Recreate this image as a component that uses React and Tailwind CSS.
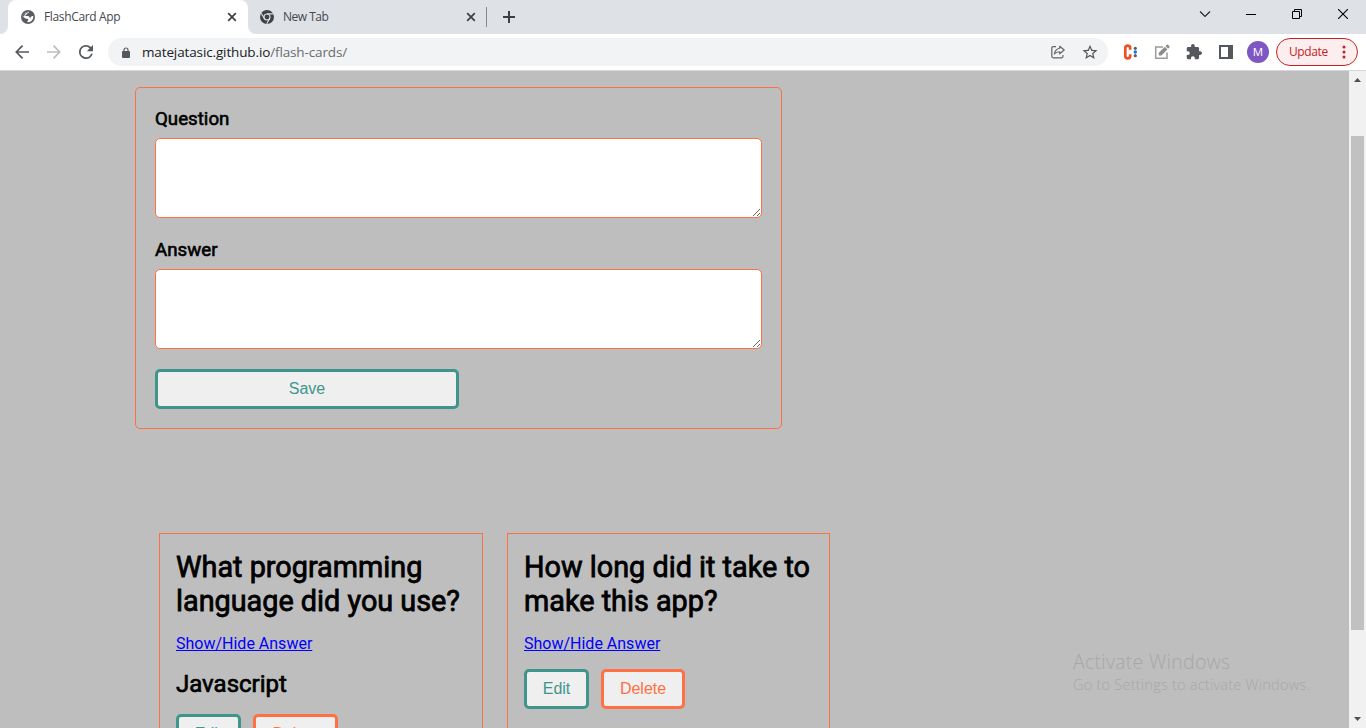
const UI_FONT = "font-['Open_Sans','Noto_Sans',sans-serif]";

function TabClose() {
  return (
    <svg width="10" height="10" viewBox="0 0 10 10" className="shrink-0">
      <path d="M1.2 1.2 8.8 8.8M8.8 1.2 1.2 8.8" stroke="#3c4043" strokeWidth="1.7" />
    </svg>
  );
}

function GlobeIcon() {
  return (
    <svg width="14" height="14" viewBox="0 0 14 14" className="shrink-0">
      <circle cx="7" cy="7" r="7" fill="#5a5e63" />
      <path d="M7.6 1.7C8.100 2.700 7.200 3.400 6 3.500c-.1 1.300-1.500 1-1.700 2 0 .7.900.6 1.900.6 1.500 0 2.300.5 2.300 1.600 1.300 0 1.900-.7 2.100-1.700h1.700c.2 2.500-.8 4.400-2.600 5.500-1 .6-2.100.9-3.200.8-.4-1 .2-1.500.7-2.100.3-1-.6-1.400-1.600-1.400C4 8.800 3.600 7 1.700 7 1.600 4 4.300 1.600 7.600 1.700Z" fill="#fff" />
      <path d="M1.700 7C1.600 4 4.300 1.600 7.600 1.700 6.500 3 4.300 2.800 3.900 4.600 3.600 5.800 3 6.700 1.700 7Z" fill="#5a5e63" />
    </svg>
  );
}

function ChromeIcon() {
  return (
    <svg width="14" height="14" viewBox="0 0 14 14" className="shrink-0">
      <circle cx="7" cy="7" r="7" fill="#3f4347" />
      <circle cx="7" cy="7" r="3" fill="none" stroke="#dee1e6" strokeWidth="1.100" />
      <path d="M7 3.900h6.200M4.300 8.500 1.200 3.300M9.700 8.500 6.700 13.700" stroke="#dee1e6" strokeWidth="1.100" />
    </svg>
  );
}

function TabStrip() {
  return (
    <div className="flex h-[34px] bg-[#dee1e6]">
      <div className="h-full w-2 bg-white"><div className="h-full rounded-br-lg bg-[#dee1e6]" /></div>
      <div className="flex h-full w-60 items-center rounded-t-lg bg-white pl-[13px] pr-[11px]">
        <GlobeIcon />
        <span className="ml-[9px] flex-1 whitespace-nowrap text-[12px] tracking-[-0.350px] text-[#45494d]">FlashCard App</span>
        <TabClose />
      </div>
      <div className="h-full bg-white">
        <div className="flex h-full w-[238px] items-center rounded-bl-lg bg-[#dee1e6] pl-3 pr-[10px]">
          <ChromeIcon />
          <span className="ml-[9px] flex-1 whitespace-nowrap text-[12px] tracking-[-0.500px] text-[#45494d]">New Tab</span>
          <TabClose />
        </div>
      </div>
      <div className="mt-[7px] h-5 w-px bg-[#868b90]" />
      <svg width="12" height="12" viewBox="0 0 12 12" className="ml-4 mt-[11px]">
        <path d="M6 0v12M0 6h12" stroke="#3c4043" strokeWidth="2" />
      </svg>
      <div className="ml-auto flex h-[28px] items-center">
        <svg width="12" height="8" viewBox="0 0 12 8" className="mr-[35px]"><path d="M1 1.500l5 5 5-5" stroke="#222" fill="none" strokeWidth="1.100" /></svg>
        <svg width="10" height="10" viewBox="0 0 10 10" className="mr-9"><path d="M0 5.500h10" stroke="#000" /></svg>
        <svg width="10" height="10" viewBox="0 0 10 10" className="mr-9"><path d="M.5 2.500h7v7h-7zM2.500 2.500v-2h7v7h-2" stroke="#000" fill="none" /></svg>
        <svg width="10" height="10" viewBox="0 0 10 10" className="mr-[18px]"><path d="M0 0l10 10M10 0 0 10" stroke="#000" strokeWidth="1.100" /></svg>
      </div>
    </div>
  );
}

function Toolbar() {
  return (
    <div className="flex h-[37px] items-center border-b border-[#d5d7da] bg-white">
      <svg width="14" height="14" viewBox="0 0 14 14" className="ml-[15px]"><path d="M14 7H1.500M7.500.7 1.300 7l6.200 6.300" stroke="#54585d" strokeWidth="1.700" fill="none" /></svg>
      <svg width="14" height="14" viewBox="0 0 14 14" className="ml-[18px]"><path d="M0 7h12.500M6.500.7 12.700 7l-6.200 6.300" stroke="#bbbdbf" strokeWidth="1.700" fill="none" /></svg>
      <svg width="14" height="14" viewBox="4 4 16 16" className="ml-[18px]"><path fill="#54585d" d="M17.650 6.350A7.960 7.960 0 0 0 12 4a8 8 0 1 0 7.730 10h-2.080A6 6 0 1 1 12 6c1.660 0 3.140.69 4.220 1.780L13 11h7V4z" /></svg>
      <div className="ml-[15px] flex h-7 w-[1000px] items-center rounded-full bg-[#f1f3f4]">
        <svg width="8" height="11" viewBox="0 0 8 11" className="ml-[14px]"><path d="M2 5V3a2 2 0 0 1 4 0v2" stroke="#54585d" strokeWidth="1.200" fill="none" /><rect y="4" width="8" height="7" rx="1" fill="#54585d" /></svg>
        <span className="ml-3 flex-1 whitespace-nowrap text-[13.500px] tracking-[-0.130px] text-[#202124]">matejatasic.github.io<span className="text-[#696d71]">/flash-cards/</span></span>
        <svg width="14" height="14" viewBox="0 0 14 14" className="mr-[17px]">
          <path d="M5 1.600H2.300a1.500 1.500 0 0 0-1.500 1.500v8.200a1.500 1.500 0 0 0 1.500 1.500h8.200a1.500 1.500 0 0 0 1.500-1.500V10" fill="none" stroke="#5f6368" strokeWidth="1.200" />
          <path d="M8.700 1.200 13.200 5 8.700 8.800V6.700C6.400 6.700 4.700 7.400 3.400 9c.4-2.600 2.100-5.200 5.300-5.700Z" fill="none" stroke="#5f6368" strokeWidth="1.150" strokeLinejoin="round" />
        </svg>
        <svg width="16" height="16" viewBox="1.400 1 21.200 21.200" className="mr-[10px]"><path fill="#54585d" d="m22 9.240-7.190-.62L12 2 9.190 8.630 2 9.240l5.460 4.730L5.820 21 12 17.270 18.180 21l-1.630-7.030zM12 15.400l-3.760 2.270 1-4.280-3.320-2.880 4.380-.38L12 6.100l1.710 4.040 4.380.38-3.320 2.880 1 4.280z" /></svg>
      </div>
      <svg width="15" height="16" viewBox="0 0 15 16" className="ml-[15px]">
        <path d="M7.200 5.700V4.300A2.450 2.700 0 0 0 2.300 4.300v7.400a2.450 2.700 0 0 0 4.900 0v-1.400" fill="none" stroke="#f05123" strokeWidth="2.700" />
        <circle cx="12.300" cy="4.300" r="1.600" fill="#5a6069" /><circle cx="12.300" cy="8" r="1.700" fill="#1476dd" /><circle cx="12.300" cy="11.700" r="1.600" fill="#5a6069" />
      </svg>
      <svg width="16" height="16" viewBox="0 0 16 16" className="ml-4">
        <path d="M9 3H1.700v11.300H13V8.500" fill="none" stroke="#9b9b9b" strokeWidth="1.500" />
        <path d="M4.800 11.400V8.800l6-6 2.600 2.600-6 6zM11.500 2.100 12.900.7a.8.800 0 0 1 1.100 0l1.500 1.500a.8.800 0 0 1 0 1.100l-1.400 1.400z" fill="#8b8b8b" />
      </svg>
      <svg width="16" height="16" viewBox="1 1 22 22" className="ml-4"><path fill="#54585d" d="M20.500 11H19V7c0-1.100-.9-2-2-2h-4V3.500a2.500 2.500 0 0 0-5 0V5H4c-1.100 0-1.990.9-1.990 2v3.800H3.500c1.490 0 2.700 1.210 2.700 2.700s-1.210 2.700-2.700 2.700H2V20c0 1.100.9 2 2 2h3.800v-1.500c0-1.490 1.210-2.700 2.700-2.700s2.700 1.210 2.700 2.700V22H17c1.100 0 2-.9 2-2v-4h1.500a2.500 2.500 0 0 0 0-5" /></svg>
      <svg width="14" height="14" viewBox="0 0 14 14" className="ml-[17px]"><path fill="#54585d" fillRule="evenodd" d="M0 0h14v14H0zM2 2v10h7V2z" /></svg>
      <div className="ml-[14px] flex h-[22px] w-[22px] items-center justify-center rounded-full bg-[#7e57c2] text-[11.500px] text-white">M</div>
      <div className="ml-[7px] flex h-7 w-[82px] items-center rounded-full border border-[#c5221f] bg-[#fceeee] pl-3 text-[12px] tracking-[-0.400px] text-[#c5221f]">
        Update
        <svg width="4" height="14" viewBox="0 0 4 14" className="ml-auto mr-[11px]"><circle cx="2" cy="2" r="1.500" fill="#c5221f" /><circle cx="2" cy="7" r="1.500" fill="#c5221f" /><circle cx="2" cy="12" r="1.500" fill="#c5221f" /></svg>
      </div>
    </div>
  );
}

function Field({ label }) {
  return (
    <label className="block h-[131px]">
      <span className="block h-8 pt-px text-[18.720px] leading-[24px] [-webkit-text-stroke:0.600px_black]">{label}</span>
      <textarea className="block h-20 w-full resize rounded-[5px] border border-[#ff7043] bg-white" />
    </label>
  );
}

function Button({ danger, className = "", children }) {
  return (
    <button className={`block h-10 rounded-[5px] border-[3px] bg-[#efefef] font-['Liberation_Sans',sans-serif] text-[16px] leading-5 ${danger ? "border-[#ff7043] text-[#ff7043]" : "border-[#3f958c] text-[#3f958c]"} ${className}`}>
      {children}
    </button>
  );
}

function Card({ question, answer, width }) {
  return (
    <article className={`h-[240px] shrink-0 border border-[#ff7043] px-4 pt-4 ${width}`}>
      <h2 className="whitespace-pre-line text-[28.800px] leading-[34px] [-webkit-text-stroke:0.800px_black]">{question}</h2>
      <a className="mt-4 block h-5 text-[16px] leading-5 text-[#0000ff] underline">Show/Hide Answer</a>
      {answer && <h3 className="mt-4 h-[29px] text-[24px] leading-7 [-webkit-text-stroke:0.700px_black]">{answer}</h3>}
      <div className="mt-[15px] flex gap-3">
        <Button className="w-[65px]">Edit</Button>
        <Button danger className={answer ? "w-[85px]" : "w-[84px]"}>Delete</Button>
      </div>
    </article>
  );
}

function Scrollbar() {
  return (
    <div className="flex w-[17px] flex-col items-center bg-[#f1f1f1]">
      <svg width="7" height="4" viewBox="0 0 7 4" className="mt-[7px]"><path d="M0 4 3.500 0 7 4z" fill="#505050" /></svg>
      <div className="mt-[54px] h-[494px] w-[13px] bg-[#c1c1c1]" />
      <svg width="7" height="4" viewBox="0 0 7 4" className="mt-[87px]"><path d="M0 0h7L3.500 4z" fill="#505050" /></svg>
    </div>
  );
}

export default function App() {
  return (
    <div className="relative flex h-[728px] w-[1366px] flex-col overflow-hidden">
      <header className={UI_FONT}>
        <TabStrip />
        <Toolbar />
      </header>
      <div className="flex h-[657px]">
        <main className="h-full flex-1 overflow-hidden bg-[#bebebe] pt-4 font-[Roboto,sans-serif] text-black">
          <form className="ml-[135px] h-[342px] w-[647px] rounded-[5px] border border-[#ff7043] px-[19px] pt-[18px]">
            <Field label="Question" />
            <Field label="Answer" />
            <Button className="mt-px w-[304px]">Save</Button>
          </form>
          <section className="ml-[159px] mt-[104px] flex gap-6">
            <Card width="w-[324px]" question={"What programming\nlanguage did you use?"} answer="Javascript" />
            <Card width="w-[323px]" question={"How long did it take to\nmake this app?"} />
          </section>
        </main>
        <Scrollbar />
      </div>
      <div className="pointer-events-none absolute left-[1073px] top-[650px] whitespace-nowrap font-['Open_Sans',sans-serif] font-light text-[#a6a8a8]">
        <div className="text-[19.500px] leading-6 tracking-[0.270px]">Activate Windows</div>
        <div className="text-[14.500px] leading-[22px] tracking-[0.240px]">Go to Settings to activate Windows.</div>
      </div>
    </div>
  );
}
